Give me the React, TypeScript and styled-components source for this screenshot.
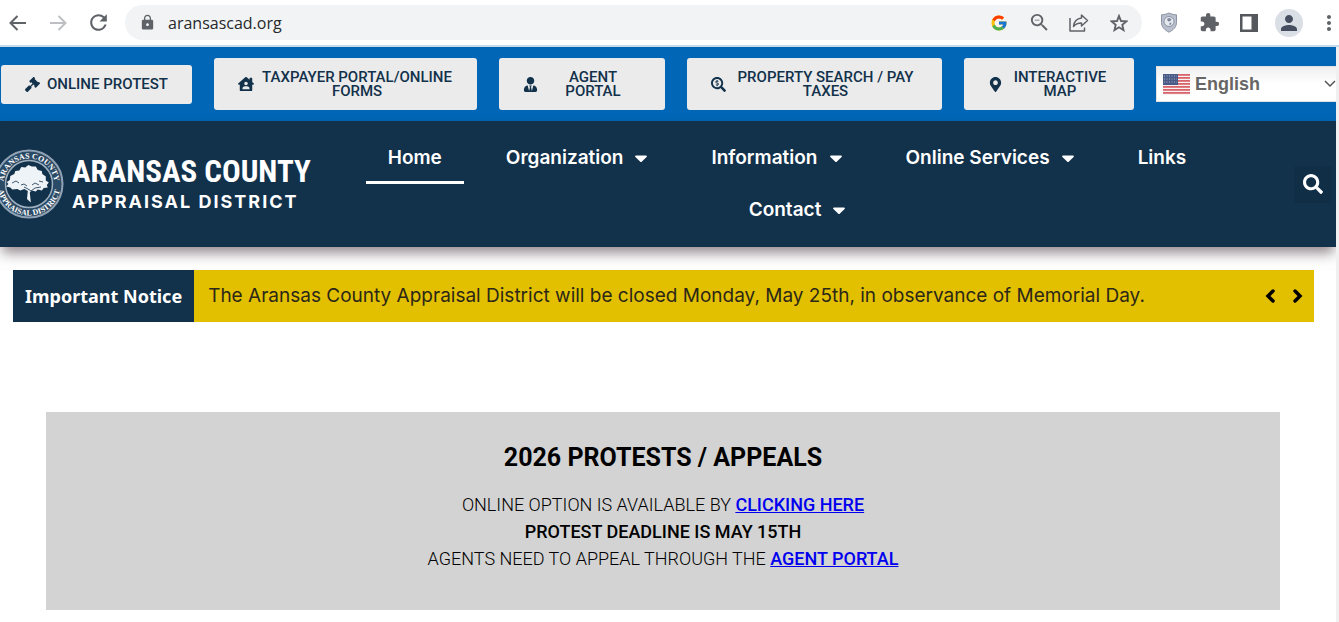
import React from "react";
import styled, { createGlobalStyle, css } from "styled-components";
import {
  MdRefresh,
  MdLock,
  MdZoomOut,
  MdExtension,
  MdPerson,
  MdMoreVert,
} from "react-icons/md";
import { FcGoogle } from "react-icons/fc";
import {
  FaGavel,
  FaHouseUser,
  FaUserTie,
  FaSearchDollar,
  FaMapMarkerAlt,
  FaSearch,
} from "react-icons/fa";

const navy = "#12314b";
const blue = "#0066b5";
const roboto = `Roboto, "Liberation Sans", sans-serif`;
const geometric = `Inter, "Open Sans", sans-serif`;

const GlobalStyle = createGlobalStyle`
  *, *::before, *::after { box-sizing: border-box; }
  html { background: #fff; }
  body { margin: 0; overflow-x: hidden; font-family: ${roboto}; color: #000; }
  button, input, select { font: inherit; color: inherit; }
  svg { display: block; flex: none; }
`;

/* ---------- browser toolbar ---------- */

const Toolbar = styled.div`
  display: flex;
  align-items: center;
  height: 47px;
  border-bottom: 2px solid #c6dced;
  background: #fff;
  color: #5f6368;
`;

const HistoryButtons = styled.div`
  display: flex;
  gap: 4px;
  margin-right: 9px;
`;

const ToolButton = styled.button<{ $w?: number; $faded?: boolean }>`
  display: flex;
  align-items: center;
  justify-content: center;
  flex: none;
  width: ${(p) => p.$w ?? 40}px;
  height: 34px;
  padding: 0;
  border: 0;
  background: none;
  color: ${(p) => (p.$faded ? "#bdbfc2" : "#5f6368")};
`;

const AddressBar = styled.div`
  display: flex;
  align-items: center;
  flex: 1;
  min-width: 0;
  height: 35px;
  padding: 0 3px 0 14px;
  border-radius: 18px;
  background: #f1f3f4;
`;

const AddressInput = styled.input`
  flex: 1;
  min-width: 0;
  margin-left: 12px;
  padding: 0;
  border: 0;
  outline: 0;
  background: none;
  color: #27292c;
  font-family: "Open Sans", "Noto Sans", sans-serif;
  font-size: 16px;
  line-height: 24px;
`;

const Extensions = styled.div`
  display: flex;
  align-items: center;
  margin-left: 7px;
`;

const Avatar = styled.span`
  display: flex;
  align-items: center;
  justify-content: center;
  width: 28px;
  height: 28px;
  border-radius: 50%;
  background: #dadee5;
  color: #454f60;
`;

const MenuButton = styled(ToolButton)`
  margin-left: 10px;
`;

const Arrow = ({ flip }: { flip?: boolean }) => (
  <svg width="18" height="18" viewBox="0 0 18 18" fill="none" stroke="currentColor" strokeWidth="2">
    {flip ? <path d="M1 9h15M9.500 2l7 7-7 7" /> : <path d="M17 9H2M8.500 2l-7 7 7 7" />}
  </svg>
);

const StarIcon = () => (
  <svg width="18" height="18" viewBox="0 0 18 18" fill="none" stroke="currentColor" strokeWidth="1.900">
    <path d="M9 2l2 5 5.300.4-4 3.500 1.200 5.200L9 13.300l-4.500 2.800 1.200-5.200-4-3.500L7 7z" />
  </svg>
);

const ShareIcon = () => (
  <svg width="20" height="18" viewBox="0 0 20 18" fill="none" stroke="currentColor" strokeWidth="1.500" strokeLinejoin="round">
    <path d="M1 4v13h14.500v-3.500" />
    <path d="M12.500 1l6 5.500-6 5.500V9C9 9 6.500 10 4.500 12.500 5 8 8 4.500 12.500 4z" />
  </svg>
);

const ShieldIcon = () => (
  <svg width="18" height="21" viewBox="0 0 18 21">
    <path d="M9 1c2.500 1.200 5 1.700 7.500 1.800v7.500c0 4.500-3 7.700-7.500 9.900-4.500-2.200-7.500-5.400-7.500-9.900V2.800C4 2.700 6.500 2.200 9 1z" fill="#b9bfcc" stroke="#8b93a5" />
    <circle cx="9" cy="9.500" r="5" fill="#e6e9ef" stroke="#8b93a5" />
    <path d="M7 7l2-1 2.500 1-1 2-2.500.5zM9.500 11l2-.5-.5 2-1.500.5z" fill="#7d8699" />
  </svg>
);

const PanelIcon = () => (
  <svg width="18" height="18" viewBox="0 0 18 18">
    <path fillRule="evenodd" fill="#55585c" d="M0 0h18v18H0zM2.500 2.500v13h9v-13z" />
  </svg>
);

/* ---------- page frame ---------- */

const Viewport = styled.div`
  border-right: 3px solid #f0f0f0;
  overflow: hidden;
`;

const QuickLinks = styled.div`
  display: grid;
  grid-template-columns:
    minmax(0, 191fr) minmax(0, 263fr) minmax(0, 166fr)
    minmax(0, 255fr) minmax(0, 170fr) minmax(0, 180fr);
  column-gap: 22px;
  align-items: center;
  padding: 11px 0 11px 1px;
  background: ${blue};
`;

const QuickButton = styled.button`
  display: flex;
  align-items: center;
  gap: 7px;
  padding: 12px 24px;
  border: 0;
  border-radius: 3px;
  background: #ebebeb;
  color: ${navy};
  font-family: ${roboto};
  font-size: 15px;
  font-weight: 500;
  line-height: 14px;
  text-align: center;
`;

const QuickLabel = styled.span`
  flex: 1;
`;

const LanguagePicker = styled.label`
  display: flex;
  align-items: center;
  height: 36px;
  padding-left: 6px;
  border: 1px solid #e2e2e2;
  border-right: 0;
  background: linear-gradient(#efefef, #fff 50%);
  color: #666;
`;

const LanguageSelect = styled.select`
  flex: 1;
  min-width: 0;
  padding: 0 0 0 5px;
  border: 0;
  outline: 0;
  appearance: none;
  background: none;
  color: #666;
  font-family: "Liberation Sans", sans-serif;
  font-size: 18px;
  font-weight: 700;
  line-height: 24px;
`;

const Flag = () => (
  <svg width="27" height="21" viewBox="0 0 27 21" aria-hidden="true">
    <rect width="27" height="21" fill="#f7f1f2" />
    {[0, 3, 6, 9, 12, 15, 18].map((y) => (
      <rect key={y} y={y} width="27" height="1.800" fill="#d9636b" />
    ))}
    <rect width="15" height="11" fill="#4a5a86" />
    {[2, 5, 8].map((y) => (
      <path key={y} d={`M1 ${y}h13`} stroke="#a9b2ca" strokeDasharray="1 1.500" />
    ))}
  </svg>
);

/* ---------- site header ---------- */

const Header = styled.header`
  position: relative;
  display: flex;
  align-items: center;
  padding: 11px 0;
  background: ${navy};
  color: #fff;
  box-shadow: 0 8px 12px -2px rgba(40, 20, 30, 0.5);
`;

const Brand = styled.a`
  display: flex;
  align-items: center;
  flex: none;
  gap: 8px;
  width: 307px;
  color: #fff;
  text-decoration: none;
`;

const BrandText = styled.span`
  display: flex;
  flex-direction: column;
  white-space: nowrap;
`;

const BrandName = styled.span`
  font-family: "Roboto Condensed", "Liberation Sans Narrow", "Liberation Sans", sans-serif;
  font-size: 31px;
  font-weight: 700;
  line-height: 36px;
`;

const BrandSub = styled.span`
  font-family: ${geometric};
  font-size: 18px;
  font-weight: 700;
  line-height: 24px;
  letter-spacing: 2px;
`;

const Seal = () => (
  <svg width="64" height="70" viewBox="6 0 64 70" aria-hidden="true">
    <defs>
      <path id="sealTop" d="M9.500 35a25.500 25.500 0 0 1 51 0" />
      <path id="sealBottom" d="M3.500 35a31.500 31.500 0 0 0 63 0" />
    </defs>
    <circle cx="35" cy="35" r="33.500" fill="#2b4a66" stroke="#8fa2b4" strokeWidth="2" />
    <circle cx="35" cy="35" r="23.500" fill={navy} stroke="#9fb0bf" strokeWidth="1.500" />
    <g fill="#fff" fontFamily="Liberation Serif, serif" fontWeight="700" fontSize="8">
      <text textAnchor="middle"><textPath href="#sealTop" startOffset="50%">ARANSAS COUNTY</textPath></text>
      <text textAnchor="middle"><textPath href="#sealBottom" startOffset="50%">APPRAISAL DISTRICT</textPath></text>
    </g>
    <path
      fill="#eef3f7"
      d="M33 50l.8-8-3.500-2-4 1.500-3-1.500-5 .5-2-2-4-1 2-2.500-1.500-2 3-2 .5-4 4-2 1-3 4-.5 2-3.500 4 .5 3-2.500 3.500 1.500 4 0 2 3.500 4 1 .5 3 3.500 2.500 0 4 3 2-2 2.500 1 2.500-4 .5-2 2.500-4-1-2 2-4-1-2 2 1 10z"
    />
    <path
      fill="none"
      stroke={navy}
      strokeWidth=".8"
      d="M18 34l4-2 3 2M27 36l3-1 3 2M38 36l3-2 4 2M30 38l4 2 3 2 4-3 6-1M45 32l4 1"
    />
  </svg>
);

const Nav = styled.nav`
  display: flex;
  flex: 1;
  flex-wrap: wrap;
  justify-content: center;
  min-width: 0;
`;

const NavItem = styled.a<{ $active?: boolean }>`
  display: flex;
  align-items: center;
  gap: 12px;
  height: 52px;
  margin-right: 20px;
  padding: 0 22px;
  color: #fff;
  font-family: ${geometric};
  font-size: 19px;
  font-weight: 600;
  line-height: 24px;
  text-decoration: none;
  ${(p) => p.$active && css`box-shadow: inset 0 -3px #fff;`}
  &:last-child { margin-right: 0; }
`;

const Caret = () => (
  <svg width="12" height="7" viewBox="0 0 12 7" fill="currentColor" aria-hidden="true">
    <path d="M1 .5h10c.8 0 1.200 1 .6 1.600L6.700 6.700a1 1 0 0 1-1.400 0L.4 2.100C-.2 1.500.2.5 1 .5z" />
  </svg>
);

const SearchButton = styled.button`
  display: flex;
  align-items: center;
  justify-content: center;
  flex: none;
  width: 37px;
  height: 37px;
  margin: 0 5px 0 7px;
  padding: 0;
  border: 0;
  background: #112e47;
  color: #fff;
`;

/* ---------- notice and content ---------- */

const Main = styled.main`
  padding: 23px 22px 12px 13px;
`;

const Notice = styled.section`
  display: flex;
  align-items: stretch;
  min-height: 52px;
  background: #e2c000;
`;

const NoticeTag = styled.strong`
  display: flex;
  align-items: center;
  padding: 0 12px;
  background: ${navy};
  color: #fff;
  font-family: "Noto Sans", "Open Sans", sans-serif;
  font-size: 18px;
  font-weight: 700;
  line-height: 24px;
`;

const NoticeText = styled.p`
  flex: 1;
  align-self: center;
  margin: 0;
  padding-left: 14px;
  color: #2c2718;
  font-family: ${geometric};
  font-size: 19px;
  line-height: 24px;
`;

const NoticeArrows = styled.div`
  display: flex;
  align-items: center;
  padding-right: 2px;
`;

const ArrowButton = styled(ToolButton)`
  color: #000;
`;

const ProtestCard = styled.section`
  margin: 90px 34px 0 33px;
  padding: 31px 20px 38px;
  background: #d3d3d3;
  text-align: center;
`;

const CardTitle = styled.h2`
  margin: 0 0 18px;
  font-size: 25px;
  font-weight: 700;
  line-height: 30px;
`;

const CardText = styled.p<{ $strong?: boolean }>`
  margin: 0;
  font-size: 18px;
  font-weight: ${(p) => (p.$strong ? 500 : 300)};
  line-height: 27px;
`;

const CardLink = styled.a`
  color: #0000ee;
  font-weight: 500;
`;

const Chevron = ({ d }: { d: string }) => (
  <svg width="12" height="16" viewBox="0 0 12 16" fill="none" stroke="currentColor" strokeWidth="3.500" strokeLinecap="round">
    <path d={d} />
  </svg>
);

const quickLinks = [
  { label: "ONLINE PROTEST", icon: <FaGavel size={15} /> },
  { label: "TAXPAYER PORTAL/ONLINE FORMS", icon: <FaHouseUser size={16} /> },
  { label: "AGENT PORTAL", icon: <FaUserTie size={15} /> },
  { label: "PROPERTY SEARCH / PAY TAXES", icon: <FaSearchDollar size={15} /> },
  { label: "INTERACTIVE MAP", icon: <FaMapMarkerAlt size={15} /> },
];

const navItems = [
  { label: "Home", active: true },
  { label: "Organization", menu: true },
  { label: "Information", menu: true },
  { label: "Online Services", menu: true },
  { label: "Links" },
  { label: "Contact", menu: true },
];

export default function App() {
  return (
    <>
      <GlobalStyle />
      <Toolbar>
        <HistoryButtons>
          <ToolButton $w={36} aria-label="Back"><Arrow /></ToolButton>
          <ToolButton $w={36} $faded aria-label="Forward"><Arrow flip /></ToolButton>
          <ToolButton $w={36} aria-label="Reload"><MdRefresh size={25} /></ToolButton>
        </HistoryButtons>
        <AddressBar>
          <MdLock size={17} />
          <AddressInput aria-label="Address" defaultValue="aransascad.org" />
          <ToolButton aria-label="Google"><FcGoogle size={18} /></ToolButton>
          <ToolButton aria-label="Zoom out"><MdZoomOut size={23} /></ToolButton>
          <ToolButton aria-label="Share"><ShareIcon /></ToolButton>
          <ToolButton aria-label="Bookmark"><StarIcon /></ToolButton>
        </AddressBar>
        <Extensions>
          <ToolButton aria-label="Shield"><ShieldIcon /></ToolButton>
          <ToolButton aria-label="Extensions"><MdExtension size={21} /></ToolButton>
          <ToolButton aria-label="Side panel"><PanelIcon /></ToolButton>
          <ToolButton aria-label="Profile"><Avatar><MdPerson size={24} /></Avatar></ToolButton>
          <MenuButton $w={20} aria-label="Menu"><MdMoreVert size={24} /></MenuButton>
        </Extensions>
      </Toolbar>

      <Viewport>
        <QuickLinks>
          {quickLinks.map((q) => (
            <QuickButton key={q.label}>
              {q.icon}
              <QuickLabel>{q.label}</QuickLabel>
            </QuickButton>
          ))}
          <LanguagePicker>
            <Flag />
            <LanguageSelect aria-label="Language" defaultValue="en">
              <option value="en">English</option>
            </LanguageSelect>
            <svg width="12" height="8" viewBox="0 0 12 8" fill="none" stroke="#555" strokeWidth="1.500">
              <path d="M1 1l5 5 5-5" />
            </svg>
          </LanguagePicker>
        </QuickLinks>

        <Header>
          <Brand href="#home">
            <Seal />
            <BrandText>
              <BrandName>ARANSAS COUNTY</BrandName>
              <BrandSub>APPRAISAL DISTRICT</BrandSub>
            </BrandText>
          </Brand>
          <Nav>
            {navItems.map((n) => (
              <NavItem key={n.label} href="#" $active={n.active}>
                {n.label}
                {n.menu && <Caret />}
              </NavItem>
            ))}
          </Nav>
          <SearchButton aria-label="Search"><FaSearch size={20} /></SearchButton>
        </Header>

        <Main>
          <Notice>
            <NoticeTag>Important Notice</NoticeTag>
            <NoticeText>
              The Aransas County Appraisal District will be closed Monday, May 25th, in observance of Memorial Day.
            </NoticeText>
            <NoticeArrows>
              <ArrowButton $w={28} aria-label="Previous notice"><Chevron d="M9 3L4 8l5 5" /></ArrowButton>
              <ArrowButton $w={28} aria-label="Next notice"><Chevron d="M3 3l5 5-5 5" /></ArrowButton>
            </NoticeArrows>
          </Notice>

          <ProtestCard>
            <CardTitle>2026 PROTESTS / APPEALS</CardTitle>
            <CardText>ONLINE OPTION IS AVAILABLE BY <CardLink href="#protest">CLICKING HERE</CardLink></CardText>
            <CardText $strong>PROTEST DEADLINE IS MAY 15TH</CardText>
            <CardText>AGENTS NEED TO APPEAL THROUGH THE <CardLink href="#agents">AGENT PORTAL</CardLink></CardText>
          </ProtestCard>
        </Main>
      </Viewport>
    </>
  );
}
